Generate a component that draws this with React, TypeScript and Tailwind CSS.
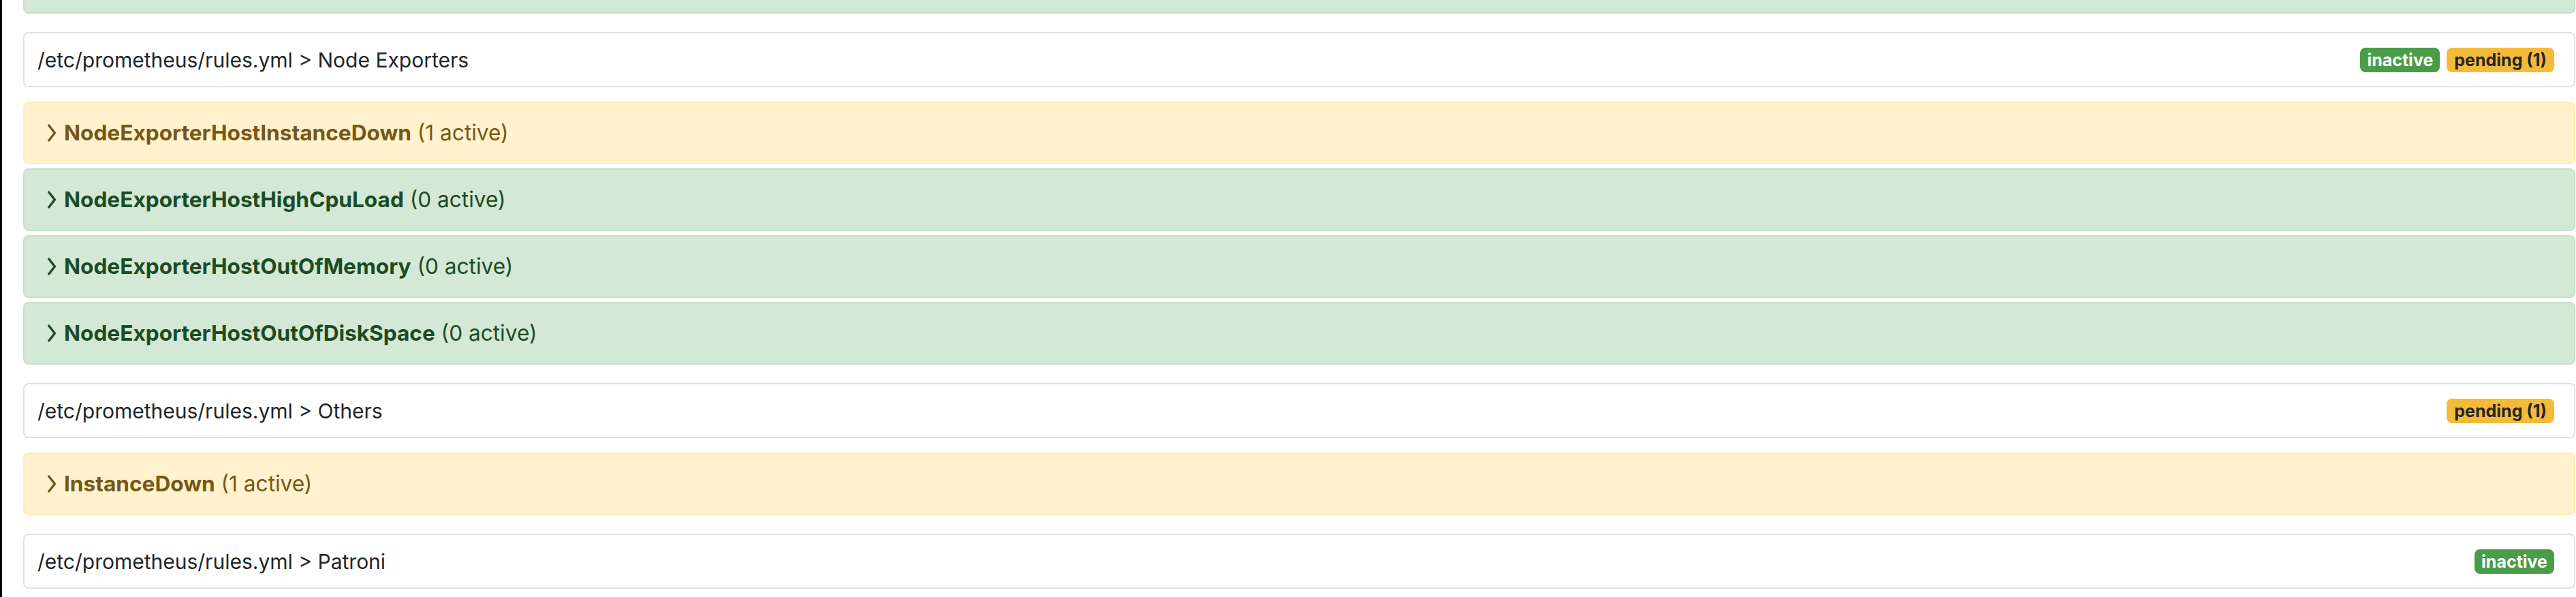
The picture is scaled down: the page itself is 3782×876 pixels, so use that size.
import React from "react";

const font = { fontFamily: "Inter, 'Noto Sans', sans-serif" };

function Chevron() {
  return (
    <svg width="12" height="26" viewBox="0 0 12 26" className="shrink-0" aria-hidden>
      <polyline points="1.8,2 10.4,13 1.8,24" fill="none" stroke="currentColor" strokeWidth="3.4" strokeLinecap="round" strokeLinejoin="round" />
    </svg>
  );
}

function Header({ title, badges }: { title: string; badges: { label: string; kind: "inactive" | "pending" }[] }) {
  return (
    <div className="mt-[27px] h-[81px] flex items-center justify-between bg-white border-2 border-[#dee2e6] rounded-[8px] pl-[19px] pr-[29px]">
      <span className="text-[30px] leading-none text-[#212529]">{title}</span>
      <div className="flex items-center gap-[10px]">
        {badges.map((b) =>
          b.kind === "inactive" ? (
            <span key={b.label} className="text-[25px] leading-[24px] font-bold px-[10px] py-[6px] rounded-[8px] bg-[#4a9d48] text-white">
              {b.label}
            </span>
          ) : (
            <span key={b.label} className="text-[25px] leading-[24px] font-bold px-[11px] py-[6px] rounded-[8px] bg-[#f4bb39] text-[#212529]">
              {b.label}
            </span>
          )
        )}
      </div>
    </div>
  );
}

function Alert({ name, count, kind, first }: { name: string; count: number; kind: "warn" | "ok"; first?: boolean }) {
  const cls =
    kind === "warn"
      ? "bg-[#fff2cc] border-[#ffedb9] text-[#765717]"
      : "bg-[#d3e8d5] border-[#c4e2c8] text-[#1c4b24]";
  return (
    <div className={`${first ? "mt-[21px]" : "mt-[6px]"} h-[92px] flex items-center border-2 rounded-[8px] pl-[34px] ${cls}`}>
      <Chevron />
      <span className="ml-[12px] text-[31.6px] leading-none">
        <span className="font-bold">{name}</span> ({count} active)
      </span>
    </div>
  );
}

export default function App() {
  return (
    <div className="w-[3782px] h-[876px] bg-white flex overflow-hidden" style={font}>
      <div className="w-[3px] h-full bg-black shrink-0" />
      <div className="flex-1 flex flex-col pl-[31px] pr-[1px]">
        <div className="h-[20px] bg-[#d3e8d5] border-2 border-t-0 border-[#c4e2c8] rounded-b-[8px]" />
        <Header
          title="/etc/prometheus/rules.yml > Node Exporters"
          badges={[
            { label: "inactive", kind: "inactive" },
            { label: "pending (1)", kind: "pending" },
          ]}
        />
        <Alert first name="NodeExporterHostInstanceDown" count={1} kind="warn" />
        <Alert name="NodeExporterHostHighCpuLoad" count={0} kind="ok" />
        <Alert name="NodeExporterHostOutOfMemory" count={0} kind="ok" />
        <Alert name="NodeExporterHostOutOfDiskSpace" count={0} kind="ok" />
        <Header title="/etc/prometheus/rules.yml > Others" badges={[{ label: "pending (1)", kind: "pending" }]} />
        <Alert first name="InstanceDown" count={1} kind="warn" />
        <Header title="/etc/prometheus/rules.yml > Patroni" badges={[{ label: "inactive", kind: "inactive" }]} />
      </div>
    </div>
  );
}
